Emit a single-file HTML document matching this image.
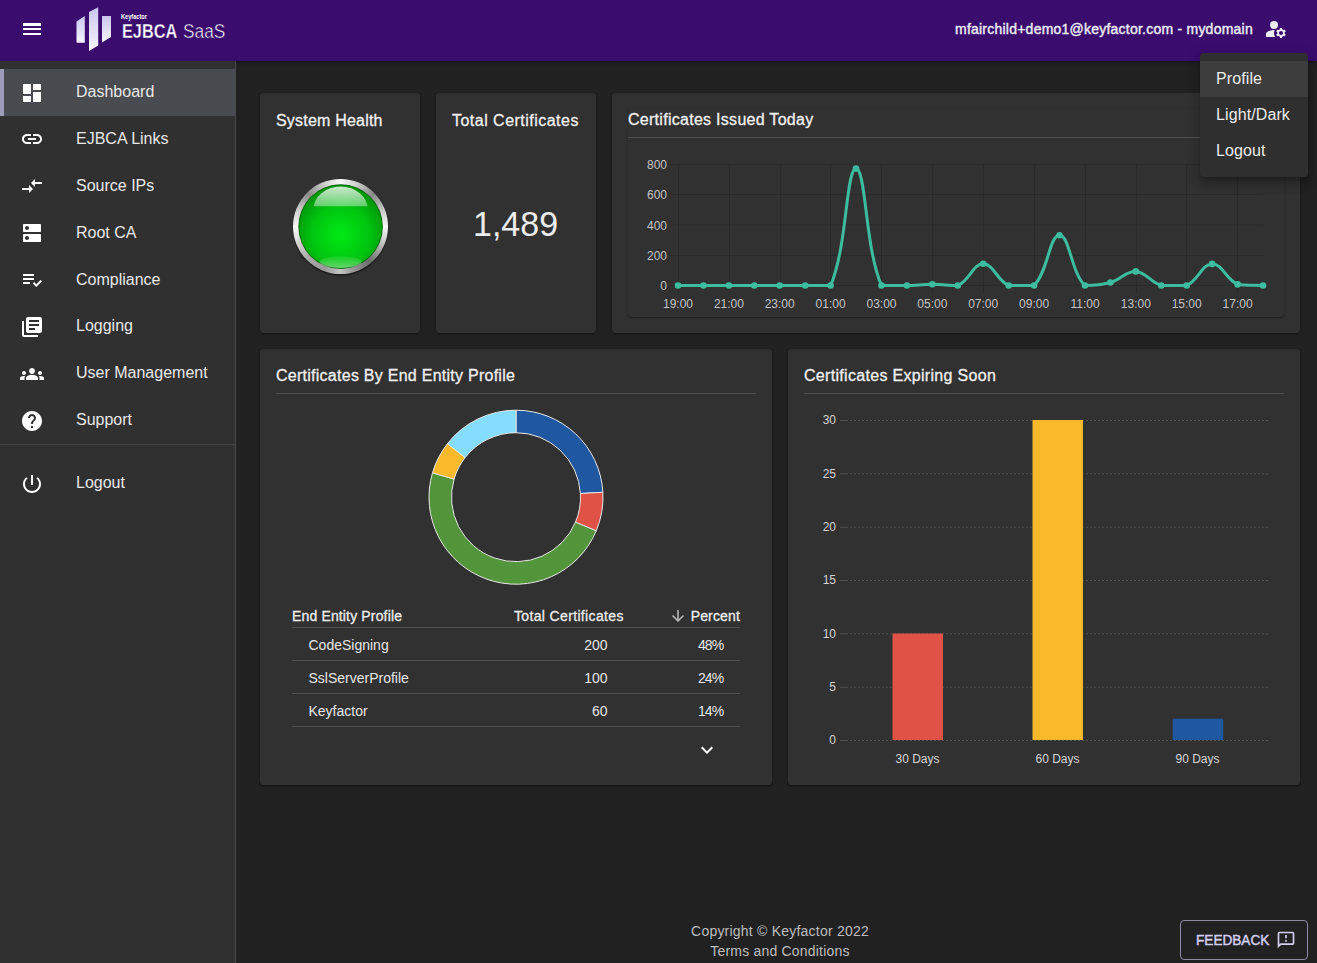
<!DOCTYPE html>
<html><head><meta charset="utf-8">
<style>
*{box-sizing:border-box;margin:0;padding:0}
html,body{width:1317px;height:963px;overflow:hidden;background:#212121;font-family:"Liberation Sans",sans-serif;color:#fff}
.abs{position:absolute}
.t{position:absolute;white-space:nowrap;line-height:1}
#hdr{position:absolute;left:0;top:0;width:1317px;height:61px;background:#3a0c6e;z-index:5;box-shadow:0 1px 2px rgba(0,0,0,.35),0 2px 4px rgba(0,0,0,.15)}
#drw{position:absolute;left:0;top:61px;width:236px;height:902px;background:#303030;border-right:1px solid #4a4a4a;z-index:6}
.nav{position:absolute;left:0;width:235px;height:47px}
.nav .t{left:76px;top:15px;font-size:16px;color:#e8e8e8}
.nav svg{position:absolute;left:20px;top:11.5px;width:24px;height:24px;fill:#fff}
.sel{background:#4a4b50}
.sel:before{content:"";position:absolute;left:0;top:0;width:4px;height:47px;background:#9e9cb9}
.card{position:absolute;background:#313131;border-radius:4px;box-shadow:0 2px 1px -1px rgba(0,0,0,.2),0 1px 1px 0 rgba(0,0,0,.14),0 1px 3px 0 rgba(0,0,0,.12)}
.ttl{position:absolute;font-size:16px;font-weight:400;letter-spacing:0.2px;-webkit-text-stroke:0.3px #f0f0f0;color:#f0f0f0;line-height:1;white-space:nowrap}
.div{position:absolute;height:1px;background:#505050}
.th{position:absolute;font-size:14px;font-weight:400;letter-spacing:0.15px;-webkit-text-stroke:0.3px #ececec;color:#ececec;line-height:1;white-space:nowrap}
.td{position:absolute;font-size:14px;color:#e6e6e6;line-height:1;white-space:nowrap}
.rl{position:absolute;left:292px;width:448px;height:1px;background:#515151}
</style></head><body>

<!-- HEADER -->
<div id="hdr">
  <svg class="abs" style="left:20px;top:17px" width="24" height="24" viewBox="0 0 24 24" fill="#fff"><path d="M3 18h18v-2H3v2zm0-5h18v-2H3v2zm0-6v2h18V6H3z"/></svg>
  <svg class="abs" style="left:74px;top:5px" width="40" height="48" viewBox="74 5 40 48">
    <defs><linearGradient id="lg" x1="0" y1="0" x2="0" y2="1"><stop offset="0" stop-color="#c9c6ee"/><stop offset="1" stop-color="#f7f6ff"/></linearGradient></defs>
    <path d="M76.5,21.5 L84.8,16 L84.8,42.8 L77.5,42.8 Q76.5,42.8 76.5,41.8 Z" fill="url(#lg)"/>
    <path d="M89,12 L98.2,7.3 L98.2,45.5 L89,51 Z" fill="url(#lg)"/>
    <path d="M102,16 L111,16 L111,37 L102,42.4 Z" fill="url(#lg)"/>
  </svg>
  <div class="t" style="left:121px;top:14px;font-size:6.5px;font-weight:700;color:#fff;transform:scaleX(0.867);transform-origin:0 0">Keyfactor</div>
  <div class="t" style="left:121.6px;top:20.7px;font-size:20px;font-weight:700;color:#fff;-webkit-text-stroke:0.3px #3a0c6e;transform:scaleX(0.814);transform-origin:0 0">EJBCA</div>
  <div class="t" style="left:182.6px;top:20.7px;font-size:20px;font-weight:400;color:#fff;-webkit-text-stroke:0.5px #3a0c6e;transform:scaleX(0.865);transform-origin:0 0">SaaS</div>
  <div class="t" style="left:955px;top:21.9px;font-size:14px;font-weight:400;color:#ececf4;letter-spacing:0.23px;-webkit-text-stroke:0.4px #ececf4">mfairchild+demo1@keyfactor.com - mydomain</div>
  <svg class="abs" style="left:1264px;top:17px" width="24" height="24" viewBox="0 0 24 24" fill="#ececf4"><circle cx="10" cy="8" r="4"/><path d="M10.67 13.02c-.22-.01-.44-.02-.67-.02-2.42 0-4.68.67-6.61 1.82-.88.52-1.39 1.5-1.39 2.53V20h9.26c-.79-1.13-1.26-2.51-1.26-4 0-1.07.25-2.07.67-2.98zM20.75 16c0-.22-.03-.42-.06-.63l1.14-1.01-1-1.73-1.45.49c-.32-.27-.68-.48-1.08-.63L18 11h-2l-.3 1.49c-.4.15-.76.36-1.08.63l-1.45-.49-1 1.73 1.14 1.01c-.03.21-.06.41-.06.63s.03.42.06.63l-1.14 1.01 1 1.73 1.45-.49c.32.27.68.48 1.08.63L16 21h2l.3-1.49c.4-.15.76-.36 1.08-.63l1.45.49 1-1.73-1.14-1.01c.03-.21.06-.41.06-.63zM17 18c-1.1 0-2-.9-2-2s.9-2 2-2 2 .9 2 2-.9 2-2 2z"/></svg>
</div>

<!-- DRAWER -->
<div id="drw">
  <div class="nav sel" style="top:8.0px"><svg viewBox="0 0 24 24"><path d="M3 13h8V3H3v10zm0 8h8v-6H3v6zm10 0h8V11h-8v10zm0-18v6h8V3h-8z"/></svg><div class="t">Dashboard</div></div>
  <div class="nav" style="top:54.875px"><svg viewBox="0 0 24 24"><path d="M3.9 12c0-1.71 1.39-3.1 3.1-3.1h4V7H7c-2.76 0-5 2.24-5 5s2.24 5 5 5h4v-1.9H7c-1.71 0-3.1-1.39-3.1-3.1zM8 13h8v-2H8v2zm9-6h-4v1.9h4c1.71 0 3.1 1.39 3.1 3.1s-1.39 3.1-3.1 3.1h-4V17h4c2.76 0 5-2.24 5-5s-2.24-5-5-5z"/></svg><div class="t">EJBCA Links</div></div>
  <div class="nav" style="top:101.75px"><svg viewBox="0 0 24 24"><path d="M9.01 14H2v2h7.01v3L13 15l-3.99-4v3zm5.98-1v-3H22V8h-7.01V5L11 9l3.99 4z"/></svg><div class="t">Source IPs</div></div>
  <div class="nav" style="top:148.625px"><svg viewBox="0 0 24 24"><path d="M20 13H4c-.55 0-1 .45-1 1v6c0 .55.45 1 1 1h16c.55 0 1-.45 1-1v-6c0-.55-.45-1-1-1zM7 19c-1.1 0-2-.9-2-2s.9-2 2-2 2 .9 2 2-.9 2-2 2zM20 3H4c-.55 0-1 .45-1 1v6c0 .55.45 1 1 1h16c.55 0 1-.45 1-1V4c0-.55-.45-1-1-1zM7 9c-1.1 0-2-.9-2-2s.9-2 2-2 2 .9 2 2-.9 2-2 2z"/></svg><div class="t">Root CA</div></div>
  <div class="nav" style="top:195.5px"><svg viewBox="0 0 24 24"><path d="M3 10h11v2H3zm0-4h11v2H3zm0 8h7v2H3zm17.59-2.07-4.25 4.24-2.12-2.12-1.41 1.41L16.34 19 22 13.34z"/></svg><div class="t">Compliance</div></div>
  <div class="nav" style="top:242.375px"><svg viewBox="0 0 24 24"><path d="M4 6H2v14c0 1.1.9 2 2 2h14v-2H4V6zm16-4H8c-1.1 0-2 .9-2 2v12c0 1.1.9 2 2 2h12c1.1 0 2-.9 2-2V4c0-1.1-.9-2-2-2zm-1 9H9V9h10v2zm-4 4H9v-2h6v2zm4-8H9V5h10v2z"/></svg><div class="t">Logging</div></div>
  <div class="nav" style="top:289.25px"><svg viewBox="0 0 24 24"><path d="M12 12.75c1.63 0 3.07.39 4.24.9 1.08.48 1.76 1.56 1.76 2.73V18H6v-1.61c0-1.18.68-2.26 1.76-2.73 1.17-.52 2.61-.91 4.24-.91zM4 13c1.1 0 2-.9 2-2s-.9-2-2-2-2 .9-2 2 .9 2 2 2zm1.13 1.1c-.37-.06-.74-.1-1.130-.1-.99 0-1.93.21-2.78.58C.48 14.9 0 15.62 0 16.43V18h4.5v-1.61c0-.83.23-1.61.63-2.29zM20 13c1.1 0 2-.9 2-2s-.9-2-2-2-2 .9-2 2 .9 2 2 2zm4 3.43c0-.81-.48-1.53-1.22-1.850-.85-.37-1.79-.58-2.78-.58-.39 0-.76.04-1.13.1.4.68.63 1.46.63 2.29V18H24v-1.57zM12 6c1.66 0 3 1.34 3 3s-1.34 3-3 3-3-1.34-3-3 1.34-3 3-3z"/></svg><div class="t">User Management</div></div>
  <div class="nav" style="top:336.125px"><svg viewBox="0 0 24 24"><path d="M12 2C6.48 2 2 6.48 2 12s4.48 10 10 10 10-4.48 10-10S17.52 2 12 2zm1 17h-2v-2h2v2zm2.07-7.75-.9.92C13.45 12.9 13 13.5 13 15h-2v-.5c0-1.1.45-2.1 1.17-2.83l1.24-1.26c.37-.36.59-.86.59-1.41 0-1.1-.9-2-2-2s-2 .9-2 2H8c0-2.21 1.790-4 4-4s4 1.79 4 4c0 .88-.36 1.68-.93 2.25z"/></svg><div class="t">Support</div></div>
  <div class="abs" style="left:0;top:383px;width:235px;height:1px;background:#444"></div>
  <div class="nav" style="top:399.3px"><svg viewBox="0 0 24 24"><path d="M13 3h-2v10h2V3zm4.83 2.17-1.42 1.42C17.99 7.86 19 9.81 19 12c0 3.87-3.13 7-7 7s-7-3.13-7-7c0-2.19 1.01-4.14 2.58-5.420L6.17 5.17C4.23 6.82 3 9.26 3 12c0 4.97 4.03 9 9 9s9-4.03 9-9c0-2.74-1.23-5.18-3.17-6.83z"/></svg><div class="t">Logout</div></div>
</div>

<!-- CARDS -->
<div class="card" style="left:260px;top:93px;width:160px;height:240px"></div>
<div class="card" style="left:436px;top:93px;width:160px;height:240px"></div>
<div class="card" style="left:612px;top:93px;width:688px;height:240px"></div>
<div class="card" style="left:260px;top:349px;width:512px;height:436px"></div>
<div class="card" style="left:788px;top:349px;width:512px;height:436px"></div>

<!-- inner paper of line chart -->
<div class="abs" style="left:628px;top:109px;width:656px;height:208px;border-radius:4px;background:#313131;box-shadow:0 2px 1px -1px rgba(0,0,0,.2),0 1px 1px 0 rgba(0,0,0,.14),0 1px 3px 0 rgba(0,0,0,.12)"></div>

<div class="ttl" style="left:276px;top:112.5px">System Health</div>
<div class="ttl" style="left:452px;top:112.5px;letter-spacing:0.48px">Total Certificates</div>
<div class="t" style="left:472.9px;top:206.3px;font-size:35px;color:#ececec;transform:scaleX(0.972);transform-origin:0 0">1,489</div>
<div class="ttl" style="left:628px;top:111.5px;letter-spacing:0.28px">Certificates Issued Today</div>
<div class="div" style="left:628px;top:137px;width:656px"></div>

<div class="ttl" style="left:276px;top:367.5px;letter-spacing:0.26px">Certificates By End Entity Profile</div>
<div class="div" style="left:276px;top:393px;width:480px"></div>
<div class="ttl" style="left:804px;top:367.5px;letter-spacing:0.31px">Certificates Expiring Soon</div>
<div class="div" style="left:804px;top:393px;width:480px"></div>

<!-- TABLE -->
<div class="th" style="left:292px;top:609.4px">End Entity Profile</div>
<div class="th" style="left:500px;width:123.8px;text-align:right;top:609.4px;letter-spacing:0.35px">Total Certificates</div>
<svg class="abs" style="left:668.8px;top:606.5px" width="18" height="18" viewBox="0 0 24 24" fill="#bdbdbd"><path d="M20 12l-1.41-1.41L13 16.17V4h-2v12.17l-5.58-5.59L4 12l8 8 8-8z"/></svg>
<div class="th" style="left:640px;width:100px;text-align:right;top:609.4px">Percent</div>
<div class="rl" style="top:627px"></div>
<div class="td" style="left:308.5px;top:637.8px">CodeSigning</div>
<div class="td" style="left:500px;width:107.5px;text-align:right;top:637.8px">200</div>
<div class="td" style="left:640px;width:83.5px;text-align:right;top:637.8px;letter-spacing:-0.8px">48%</div>
<div class="rl" style="top:660px"></div>
<div class="td" style="left:308.5px;top:670.8px">SslServerProfile</div>
<div class="td" style="left:500px;width:107.5px;text-align:right;top:670.8px">100</div>
<div class="td" style="left:640px;width:83.5px;text-align:right;top:670.8px;letter-spacing:-0.8px">24%</div>
<div class="rl" style="top:693px"></div>
<div class="td" style="left:308.5px;top:703.8px">Keyfactor</div>
<div class="td" style="left:500px;width:107.5px;text-align:right;top:703.8px">60</div>
<div class="td" style="left:640px;width:83.5px;text-align:right;top:703.8px;letter-spacing:-0.8px">14%</div>
<div class="rl" style="top:726px"></div>
<svg class="abs" style="left:695px;top:737.5px" width="24" height="24" viewBox="0 0 24 24" fill="#fff"><path d="M16.59 8.59 12 13.17 7.41 8.59 6 10l6 6 6-6z"/></svg>

<div class="abs" style="left:292.8px;top:178.8px;width:95.6px;height:95.6px;border-radius:50%;box-shadow:0 1.5px 1.5px rgba(0,0,0,0.5);background:conic-gradient(from 0deg,#f8f8f8 0deg,#d0d0d0 20deg,#8a8a8a 45deg,#d8d8d8 75deg,#f6f6f6 90deg,#c8c8c8 110deg,#6c6c6c 140deg,#9a9a9a 165deg,#c4c4c4 180deg,#9a9a9a 200deg,#a8a8a8 225deg,#e0e0e0 255deg,#f6f6f6 270deg,#d0d0d0 290deg,#8a8a8a 315deg,#d0d0d0 340deg,#f8f8f8 360deg)"></div>
<!-- GRAPHICS LAYER -->
<svg class="abs" style="left:0;top:0" width="1317" height="963" viewBox="0 0 1317 963">
  <defs>
    <radialGradient id="gball" cx="0.5" cy="0.6" r="0.55">
      <stop offset="0" stop-color="#00ea16"/>
      <stop offset="0.65" stop-color="#00c40f"/>
      <stop offset="1" stop-color="#009a0a"/>
    </radialGradient>
    <linearGradient id="ghi" x1="0" y1="0" x2="0" y2="1">
      <stop offset="0" stop-color="#fff" stop-opacity="0.8"/>
      <stop offset="0.5" stop-color="#fff" stop-opacity="0.32"/>
      <stop offset="1" stop-color="#fff" stop-opacity="0.02"/>
    </linearGradient>
    <linearGradient id="glo" x1="0" y1="0" x2="0" y2="1">
      <stop offset="0" stop-color="#fff" stop-opacity="0.05"/>
      <stop offset="1" stop-color="#fff" stop-opacity="0.4"/>
    </linearGradient>
    <linearGradient id="gring" x1="0" y1="0" x2="1" y2="1">
      <stop offset="0" stop-color="#f4f4f4"/>
      <stop offset="0.3" stop-color="#9a9a9a"/>
      <stop offset="0.5" stop-color="#f0f0f0"/>
      <stop offset="0.75" stop-color="#8a8a8a"/>
      <stop offset="1" stop-color="#3a3a3a"/>
    </linearGradient>
  </defs>
  <!-- LED -->
  <clipPath id="hiclip"><rect x="300" y="180" width="90" height="26.3"/></clipPath>
    <circle cx="340.6" cy="226.6" r="42.3" fill="#006d06"/>
  <circle cx="340.6" cy="226.8" r="41.3" fill="url(#gball)"/>
  <ellipse cx="340.6" cy="209.5" rx="27.2" ry="23" fill="url(#ghi)" clip-path="url(#hiclip)"/>
  <ellipse cx="340.6" cy="262" rx="21" ry="6" fill="url(#glo)"/>
  <!-- LINE CHART grid -->
  <g stroke="rgba(0,0,0,0.13)" stroke-width="1">
    <path d="M670,164.5H1263M670,194.5H1263M670,225H1263M670,255.5H1263M670,285.5H1263"/>
    <path d="M678.5,164V293.5M729.5,164V293.5M780.5,164V293.5M830.5,164V293.5M881.5,164V293.5M932.5,164V293.5M983.5,164V293.5M1034.5,164V293.5M1085.5,164V293.5M1136.5,164V293.5M1186.5,164V293.5M1237.5,164V293.5"/>
  </g>
  <g font-family="Liberation Sans" font-size="12" fill="#c4c4c4" text-anchor="end">
    <text x="667" y="168.8">800</text><text x="667" y="199.1">600</text><text x="667" y="229.5">400</text><text x="667" y="259.9">200</text><text x="667" y="289.9">0</text>
  </g>
  <g font-family="Liberation Sans" font-size="12" fill="#c4c4c4" text-anchor="middle">
    <text x="678" y="308">19:00</text><text x="728.9" y="308">21:00</text><text x="779.7" y="308">23:00</text><text x="830.6" y="308">01:00</text><text x="881.5" y="308">03:00</text><text x="932.3" y="308">05:00</text><text x="983.2" y="308">07:00</text><text x="1034.1" y="308">09:00</text><text x="1085" y="308">11:00</text><text x="1135.8" y="308">13:00</text><text x="1186.7" y="308">15:00</text><text x="1237.6" y="308">17:00</text>
  </g>
  <path fill="none" stroke="#3dbd9f" stroke-width="3" d="M678.0,285.5 C688.2,285.5 693.3,285.5 703.4,285.5 C713.6,285.5 718.7,285.5 728.9,285.5 C739.0,285.5 744.1,285.5 754.3,285.5 C764.5,285.5 769.6,285.5 779.7,285.5 C789.9,285.5 795.0,285.5 805.2,285.5 C815.3,285.5 827.0,285.5 830.6,285.5 C847.4,246.9 845.9,168.6 856.0,168.6 C866.2,168.6 864.7,246.9 881.5,285.5 C885.0,285.5 896.7,285.5 906.9,285.5 C917.1,285.3 922.2,284.3 932.3,284.3 C942.5,284.3 949.0,285.5 957.8,285.5 C969.3,280.8 973.0,263.8 983.2,263.8 C993.4,263.8 997.1,280.6 1008.7,285.5 C1017.4,285.5 1027.8,285.5 1034.1,285.5 C1048.1,271.6 1049.3,235.2 1059.5,235.2 C1069.7,235.2 1071.0,272.5 1085.0,285.5 C1091.3,285.5 1100.6,285.2 1110.4,282.5 C1121.0,279.5 1125.9,270.8 1135.8,271.4 C1146.2,272.0 1150.4,282.5 1161.3,285.5 C1170.8,285.5 1177.9,285.5 1186.7,285.5 C1198.2,280.6 1201.9,264.1 1212.1,263.9 C1222.2,263.7 1226.1,279.6 1237.6,284.4 C1246.5,285.5 1252.8,285.1 1263.0,285.5"/>
  <g fill="#3dbd9f"><circle cx="678.0" cy="285.5" r="3.3"/><circle cx="703.4" cy="285.5" r="3.3"/><circle cx="728.9" cy="285.5" r="3.3"/><circle cx="754.3" cy="285.5" r="3.3"/><circle cx="779.7" cy="285.5" r="3.3"/><circle cx="805.2" cy="285.5" r="3.3"/><circle cx="830.6" cy="285.5" r="3.3"/><circle cx="856.0" cy="168.6" r="3.3"/><circle cx="881.5" cy="285.5" r="3.3"/><circle cx="906.9" cy="285.5" r="3.3"/><circle cx="932.3" cy="284.3" r="3.3"/><circle cx="957.8" cy="285.5" r="3.3"/><circle cx="983.2" cy="263.8" r="3.3"/><circle cx="1008.7" cy="285.5" r="3.3"/><circle cx="1034.1" cy="285.5" r="3.3"/><circle cx="1059.5" cy="235.2" r="3.3"/><circle cx="1085.0" cy="285.5" r="3.3"/><circle cx="1110.4" cy="282.5" r="3.3"/><circle cx="1135.8" cy="271.4" r="3.3"/><circle cx="1161.3" cy="285.5" r="3.3"/><circle cx="1186.7" cy="285.5" r="3.3"/><circle cx="1212.1" cy="263.9" r="3.3"/><circle cx="1237.6" cy="284.4" r="3.3"/><circle cx="1263.0" cy="285.5" r="3.3"/></g>

  <!-- DONUT -->
  <g stroke="#e8e8e8" stroke-width="1">
<path d="M516.00,410.20 A87,87 0 0 1 602.86,492.26 L580.40,493.54 A64.5,64.5 0 0 0 516.00,432.70 Z" fill="#1f57a0"/>
<path d="M602.86,492.26 A87,87 0 0 1 596.22,530.87 L575.47,522.16 A64.5,64.5 0 0 0 580.40,493.54 Z" fill="#e05246"/>
<path d="M596.22,530.87 A87,87 0 0 1 432.48,472.83 L454.08,479.13 A64.5,64.5 0 0 0 575.47,522.16 Z" fill="#53953a"/>
<path d="M432.48,472.83 A87,87 0 0 1 447.40,443.70 L465.14,457.53 A64.5,64.5 0 0 0 454.08,479.13 Z" fill="#f9b92b"/>
<path d="M447.40,443.70 A87,87 0 0 1 516.00,410.20 L516.00,432.70 A64.5,64.5 0 0 0 465.14,457.53 Z" fill="#84dcff"/>
  </g>

  <!-- BAR CHART -->
  <g stroke="#525252" stroke-width="1">
    <path d="M840,420.5H848M840,473.8H848M840,527.2H848M840,580.5H848M840,633.8H848M840,687.2H848M840,740.5H848"/>
    <path stroke-dasharray="2,2" stroke-dashoffset="2" d="M848,420.5H1268M848,473.8H1268M848,527.2H1268M848,580.5H1268M848,633.8H1268M848,687.2H1268M848,740.5H1268"/>
  </g>
  <g font-family="Liberation Sans" font-size="12" fill="#d4d4d4" text-anchor="end">
    <text x="836" y="424.3">30</text><text x="836" y="477.6">25</text><text x="836" y="531">20</text><text x="836" y="584.3">15</text><text x="836" y="637.6">10</text><text x="836" y="691">5</text><text x="836" y="744.3">0</text>
  </g>
  <rect x="892.5" y="633.5" width="50.5" height="106.5" fill="#e05246"/>
  <rect x="1032.5" y="420" width="50.5" height="320" fill="#f9b92b"/>
  <rect x="1172.7" y="718.7" width="50.5" height="21.3" fill="#1f57a0"/>
  <g font-family="Liberation Sans" font-size="12" fill="#d4d4d4" text-anchor="middle">
    <text x="917.5" y="762.5">30 Days</text><text x="1057.5" y="762.5">60 Days</text><text x="1197.5" y="762.5">90 Days</text>
  </g>
</svg>

<!-- FOOTER -->
<div class="t" style="left:580px;width:400px;text-align:center;top:924.2px;font-size:14px;color:#bdbdbd;letter-spacing:0.22px">Copyright © Keyfactor 2022</div>
<div class="t" style="left:580px;width:400px;text-align:center;top:944.1px;font-size:14px;color:#bdbdbd;letter-spacing:0.2px">Terms and Conditions</div>
<div class="abs" style="left:1180px;top:920px;width:128px;height:40px;border:1px solid #8d8aa6;border-radius:4px">
  <div class="t" style="left:15px;top:12px;font-size:14.4px;font-weight:400;-webkit-text-stroke:0.45px #d3cfee;color:#d3cfee;transform:scaleX(0.945);transform-origin:0 0">FEEDBACK</div>
  <svg class="abs" style="left:95.3px;top:9.3px" width="20" height="20" viewBox="0 0 24 24" fill="#d3cfee"><path d="M20 2H4c-1.1 0-1.99.9-1.99 2L2 22l4-4h14c1.1 0 2-.9 2-2V4c0-1.1-.9-2-2-2zm0 14H5.17l-.59.59-.58.58V4h16v12zm-9-4h2v2h-2zm0-6h2v4h-2z"/></svg>
</div>

<!-- MENU -->
<div class="abs" style="left:1200px;top:53px;width:108px;height:124px;background:#2f2f2f;border-radius:4px;z-index:20;box-shadow:0 5px 5px -3px rgba(0,0,0,.2),0 8px 10px 1px rgba(0,0,0,.14),0 3px 14px 2px rgba(0,0,0,.12)">
  <div class="abs" style="left:0;top:8px;width:108px;height:36px;background:#3d3d3d"></div>
  <div class="t" style="left:16px;top:71.2px;margin-top:-53px;font-size:16px;color:#ececec;letter-spacing:0.1px">Profile</div>
  <div class="t" style="left:16px;top:107.2px;margin-top:-53px;font-size:16px;color:#ececec;letter-spacing:0.1px">Light/Dark</div>
  <div class="t" style="left:16px;top:143.2px;margin-top:-53px;font-size:16px;color:#ececec;letter-spacing:0.1px">Logout</div>
</div>

</body></html>
